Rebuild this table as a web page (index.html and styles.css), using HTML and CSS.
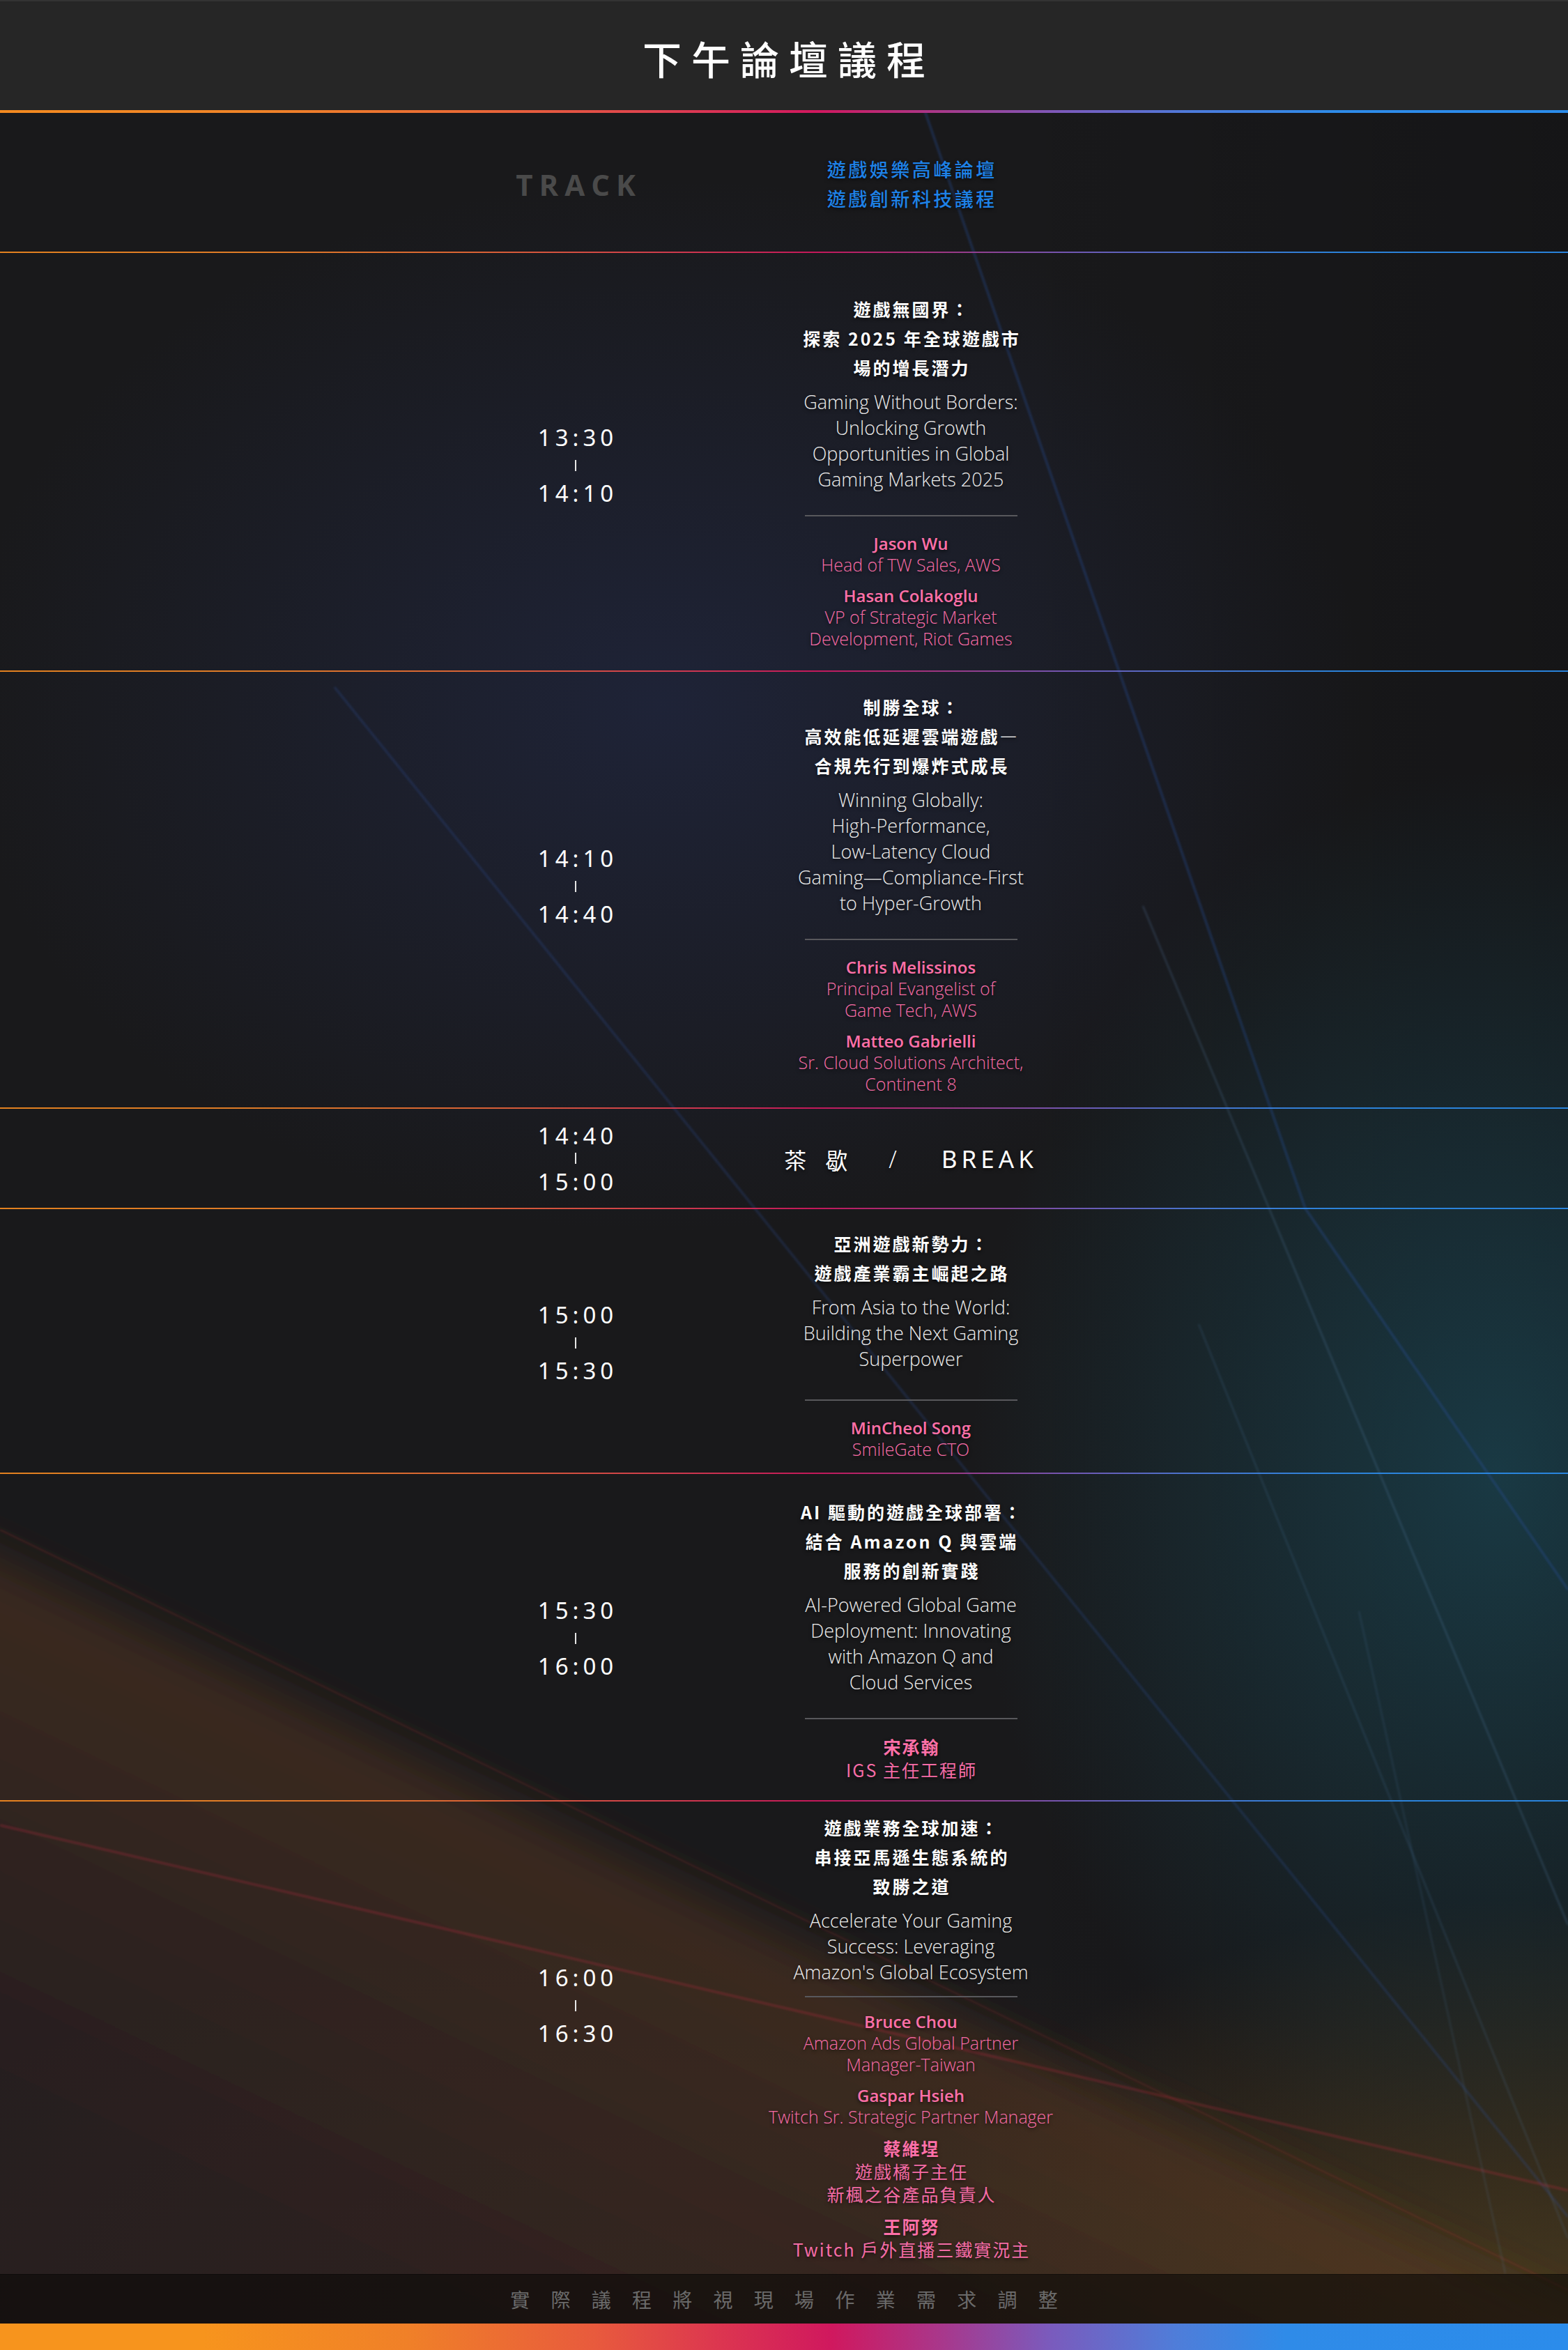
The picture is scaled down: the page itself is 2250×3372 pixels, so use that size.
FILE: index.html
```html
<!DOCTYPE html>
<html lang="zh-Hant">
<head>
<meta charset="utf-8">
<title>下午論壇議程</title>
<link rel="stylesheet" href="styles.css">
</head>
<body>
<header class="hero"><h1 class="hero-title">下午論壇議程</h1></header>
<div class="bar bar--thick"></div>
<main class="agenda">
  <section class="row row--track">
    <div class="time-col"><span class="track-label">TRACK</span></div>
    <div class="content-col track-names"><p>遊戲娛樂高峰論壇</p><p>遊戲創新科技議程</p></div>
  </section>
  <div class="bar"></div>

  <section class="row row--s1">
    <div class="time-col"><div class="time"><span>13:30</span><i class="time-sep"></i><span>14:10</span></div></div>
    <div class="content-col">
      <h2 class="cn-title">遊戲無國界：<br>探索 2025 年全球遊戲市<br>場的增長潛力</h2>
      <p class="en-title">Gaming Without Borders:<br>Unlocking Growth<br>Opportunities in Global<br>Gaming Markets 2025</p>
      <hr class="divider">
      <div class="speaker"><p class="sp-name">Jason Wu</p><p class="sp-role">Head of TW Sales, AWS</p></div>
      <div class="speaker"><p class="sp-name">Hasan Colakoglu</p><p class="sp-role">VP of Strategic Market<br>Development, Riot Games</p></div>
    </div>
  </section>
  <div class="bar"></div>

  <section class="row row--s2">
    <div class="time-col"><div class="time"><span>14:10</span><i class="time-sep"></i><span>14:40</span></div></div>
    <div class="content-col">
      <h2 class="cn-title">制勝全球：<br>高效能低延遲雲端遊戲—<br>合規先行到爆炸式成長</h2>
      <p class="en-title">Winning Globally:<br>High-Performance,<br>Low-Latency Cloud<br>Gaming—Compliance-First<br>to Hyper-Growth</p>
      <hr class="divider">
      <div class="speaker"><p class="sp-name">Chris Melissinos</p><p class="sp-role">Principal Evangelist of<br>Game Tech, AWS</p></div>
      <div class="speaker"><p class="sp-name">Matteo Gabrielli</p><p class="sp-role">Sr. Cloud Solutions Architect,<br>Continent 8</p></div>
    </div>
  </section>
  <div class="bar"></div>

  <section class="row row--break">
    <div class="time-col"><div class="time time--compact"><span>14:40</span><i class="time-sep"></i><span>15:00</span></div></div>
    <div class="content-col break">
      <span class="break-cn">茶歇</span><span class="break-slash">/</span><span class="break-en">BREAK</span>
    </div>
  </section>
  <div class="bar"></div>

  <section class="row row--s4">
    <div class="time-col"><div class="time"><span>15:00</span><i class="time-sep"></i><span>15:30</span></div></div>
    <div class="content-col">
      <h2 class="cn-title">亞洲遊戲新勢力：<br>遊戲產業霸主崛起之路</h2>
      <p class="en-title">From Asia to the World:<br>Building the Next Gaming<br>Superpower</p>
      <hr class="divider">
      <div class="speaker"><p class="sp-name">MinCheol Song</p><p class="sp-role">SmileGate CTO</p></div>
    </div>
  </section>
  <div class="bar"></div>

  <section class="row row--s5">
    <div class="time-col"><div class="time"><span>15:30</span><i class="time-sep"></i><span>16:00</span></div></div>
    <div class="content-col">
      <h2 class="cn-title">AI 驅動的遊戲全球部署：<br>結合 Amazon Q 與雲端<br>服務的創新實踐</h2>
      <p class="en-title">AI-Powered Global Game<br>Deployment: Innovating<br>with Amazon Q and<br>Cloud Services</p>
      <hr class="divider">
      <div class="speaker"><p class="sp-name sp-cjk">宋承翰</p><p class="sp-role sp-cjk">IGS 主任工程師</p></div>
    </div>
  </section>
  <div class="bar"></div>

  <section class="row row--s6">
    <div class="time-col"><div class="time"><span>16:00</span><i class="time-sep"></i><span>16:30</span></div></div>
    <div class="content-col">
      <h2 class="cn-title">遊戲業務全球加速：<br>串接亞馬遜生態系統的<br>致勝之道</h2>
      <p class="en-title">Accelerate Your Gaming<br>Success: Leveraging<br>Amazon's Global Ecosystem</p>
      <hr class="divider">
      <div class="speaker"><p class="sp-name">Bruce Chou</p><p class="sp-role">Amazon Ads Global Partner<br>Manager-Taiwan</p></div>
      <div class="speaker"><p class="sp-name">Gaspar Hsieh</p><p class="sp-role">Twitch Sr. Strategic Partner Manager</p></div>
      <div class="speaker"><p class="sp-name sp-cjk">蔡維埕</p><p class="sp-role sp-cjk">遊戲橘子主任<br>新楓之谷產品負責人</p></div>
      <div class="speaker"><p class="sp-name sp-cjk">王阿努</p><p class="sp-role sp-cjk">Twitch 戶外直播三鐵實況主</p></div>
    </div>
  </section>

  <p class="note">實 際 議 程 將 視 現 場 作 業 需 求 調 整</p>
</main>
<div class="footer-bar"></div>
</body>
</html>
```

FILE: styles.css
```css
* { box-sizing: border-box; margin: 0; padding: 0; }

body {
  width: 2250px;
  background: #19191b;
  color: #fff;
  font-family: "Open Sans", "Noto Sans CJK TC", sans-serif;
}

/* header */
.hero {
  height: 158px;
  background: #262626;
  border-top: 2px solid #333;
  display: flex;
  align-items: center;
  justify-content: center;
  padding-top: 6px;
}
.hero-title {
  font-family: "Noto Sans CJK TC", sans-serif;
  font-weight: 500;
  font-size: 56px;
  line-height: 1;
  letter-spacing: 14px;
  padding-left: 14px;
  color: #fff;
}

/* brand gradient bars */
.bar {
  height: 2px;
  background: linear-gradient(90deg, #f48a20 0%, #f08428 16%, #ea6a36 30%, #df4150 42%, #d2185f 52%, #a8398b 60%, #7a5bbd 68%, #4d7bdc 76%, #2e8be9 85%, #2b8ceb 100%);
  opacity: .92;
}
.bar--thick { height: 4px; opacity: 1; }

.footer-bar {
  height: 38px;
  background: linear-gradient(90deg, #f7941d 0%, #f7941d 13%, #f08028 26%, #e85a3d 38%, #dc3550 46%, #d0185e 53%, #a9378b 60%, #7a5bbd 67%, #4f7dd9 75%, #2f8be8 82%, #2b8ceb 100%);
}

/* main area with decorative background */
.agenda {
  background:
    url("data:image/svg+xml;utf8,<svg xmlns='http://www.w3.org/2000/svg' viewBox='0 0 2250 3172' preserveAspectRatio='none'><defs><filter id='b' filterUnits='userSpaceOnUse' x='-300' y='1700' width='2900' height='1700'><feGaussianBlur stdDeviation='34'/></filter><filter id='g' filterUnits='userSpaceOnUse' x='-300' y='-300' width='2900' height='3800'><feGaussianBlur stdDeviation='1.5'/></filter><linearGradient id='w' gradientUnits='userSpaceOnUse' x1='900' y1='2507' x2='600' y2='3130'><stop offset='0' stop-color='%235e3c26' stop-opacity='.5'/><stop offset='1' stop-color='%23382520' stop-opacity='.42'/></linearGradient></defs><polygon points='-120,2018 2370,3213 2370,3400 -120,3400' fill='url(%23w)' filter='url(%23b)'/><g fill='none' filter='url(%23g)'><polyline points='1327,-3 1873,1572 2250,2119' stroke='%232a4d9e' stroke-opacity='.4' stroke-width='3'/><line x1='480' y1='824' x2='2250' y2='3019' stroke='%232b4c9c' stroke-opacity='.3' stroke-width='3'/><line x1='0' y1='2457' x2='2250' y2='2981' stroke='%23c8283e' stroke-opacity='.32' stroke-width='3'/><line x1='0' y1='2033' x2='2250' y2='3124' stroke='%23b82a3c' stroke-opacity='.24' stroke-width='2'/><line x1='1640' y1='1138' x2='2250' y2='2600' stroke='%236a9ad0' stroke-opacity='.24' stroke-width='2'/><line x1='1720' y1='1738' x2='2250' y2='3050' stroke='%235a8cc4' stroke-opacity='.2' stroke-width='2'/><line x1='1950' y1='2150' x2='2160' y2='3100' stroke='%235a8cc4' stroke-opacity='.16' stroke-width='2'/></g></svg>") 0 0 / 100% 100% no-repeat,
    radial-gradient(ellipse 1050px 1400px at 2150px 1950px, rgba(28, 86, 104, .55), rgba(28, 86, 104, 0) 72%),
    radial-gradient(ellipse 1400px 1050px at 950px 850px, rgba(34, 42, 74, .6), rgba(34, 42, 74, 0) 72%),
    radial-gradient(ellipse 1400px 850px at 2250px 3172px, rgba(112, 86, 38, .55), rgba(112, 86, 38, 0) 72%),
    radial-gradient(ellipse 1800px 700px at 1000px 3120px, rgba(72, 46, 28, .35), rgba(72, 46, 28, 0) 72%),
    linear-gradient(90deg, rgba(0, 0, 0, 0) 62%, rgba(0, 0, 0, .15) 100%),
    #19191b;
}

/* rows */
.row {
  display: grid;
  grid-template-columns: 350px 460px;
  column-gap: 76px;
  padding-left: 651px;
}
.time-col {
  align-self: stretch;
  display: flex;
  align-items: center;
  justify-content: center;
}
.content-col {
  text-align: center;
  text-shadow: 0 2px 5px rgba(0, 0, 0, .65);
  white-space: nowrap;
}

/* track row */
.row--track .content-col { padding: 60px 0 55px; }
.track-label {
  font-family: "Open Sans", sans-serif;
  font-weight: 700;
  font-size: 42px;
  line-height: 1;
  letter-spacing: 9px;
  padding-left: 9px;
  color: #4a4a4a;
  padding-top: 6px;
}
.track-names p {
  font-family: "Noto Sans CJK TC", sans-serif;
  font-weight: 500;
  font-size: 27px;
  line-height: 42px;
  letter-spacing: 3.5px;
  padding-left: 3.5px;
  color: #1e82e8;
}

/* time block */
.time {
  display: flex;
  flex-direction: column;
  align-items: center;
  font-family: "Noto Sans", sans-serif;
  font-size: 33px;
  line-height: 40px;
  letter-spacing: 6px;
  color: #fff;
}
.time span { padding-left: 6px; }
.time-sep {
  display: block;
  width: 2px;
  height: 16px;
  margin: 12px 0;
  background: #e6e6e6;
}
.time--compact { line-height: 33px; }
.time--compact .time-sep { margin: 8px 0 9px; }

/* session content */
.cn-title {
  font-family: "Noto Sans CJK TC", sans-serif;
  font-weight: 700;
  font-size: 25px;
  line-height: 42px;
  letter-spacing: 3px;
  padding-left: 3px;
  color: #fff;
}
.en-title {
  margin-top: 10px;
  font-family: "Open Sans", sans-serif;
  font-weight: 300;
  font-size: 27px;
  line-height: 37px;
  color: #ececec;
}
.divider {
  border: 0;
  width: 305px;
  height: 2px;
  margin: 33px auto 23px;
  background: #58585c;
}
.speaker + .speaker { margin-top: 13px; }
.sp-name {
  font-family: "Open Sans", sans-serif;
  font-weight: 600;
  font-size: 24px;
  line-height: 31px;
  color: #ff70a8;
}
.sp-role {
  font-family: "Open Sans", sans-serif;
  font-weight: 300;
  font-size: 25px;
  line-height: 31px;
  color: #f56ca6;
}
.sp-cjk {
  font-family: "Noto Sans CJK TC", sans-serif;
  font-size: 25px;
  line-height: 33px;
  letter-spacing: 2px;
  padding-left: 2px;
}
.sp-name.sp-cjk { font-weight: 700; }
.sp-role.sp-cjk { font-weight: 400; }

/* per-row spacing */
.row--s1 .content-col { padding: 59px 0 30px; }
.row--s1 .time-col { padding-top: 10px; }
.row--s2 .content-col { padding: 29px 0 18px; }
.row--s2 .time-col { padding-bottom: 9px; }
.row--s4 .content-col { padding: 28px 0 18px; }
.row--s4 .divider { margin-top: 40px; }
.row--s4 .time-col { padding-top: 6px; }
.row--s5 .content-col { padding: 33px 0 27px; }
.row--s5 .time-col { padding-top: 4px; }
.row--s6 .content-col { padding: 16px 0 19px; }
.row--s6 .divider { margin: 16px auto 19px; }
.row--s6 .time-col { padding-bottom: 92px; }

/* break row */
.row--break { padding-top: 22px; padding-bottom: 21px; }
.break {
  display: flex;
  align-items: center;
  justify-content: center;
  color: #fff;
}
.break-cn {
  font-family: "Noto Sans CJK TC", sans-serif;
  font-size: 32px;
  line-height: 1;
  letter-spacing: 27px;
}
.break-slash {
  margin-left: 32px;
  font-family: "Open Sans", sans-serif;
  font-weight: 300;
  font-size: 34px;
  line-height: 1;
}
.break-en {
  margin-left: 64px;
  font-family: "Noto Sans", sans-serif;
  font-size: 35px;
  line-height: 1;
  letter-spacing: 6px;
}

/* footer note */
.note {
  height: 71px;
  display: flex;
  align-items: center;
  justify-content: center;
  background: rgba(10, 8, 6, .6);
  border-top: 1px solid rgba(0, 0, 0, .35);
  font-family: "Noto Sans CJK TC", sans-serif;
  font-size: 28px;
  letter-spacing: 12px;
  padding-left: 12px;
  color: #6a6a6a;
}
```
